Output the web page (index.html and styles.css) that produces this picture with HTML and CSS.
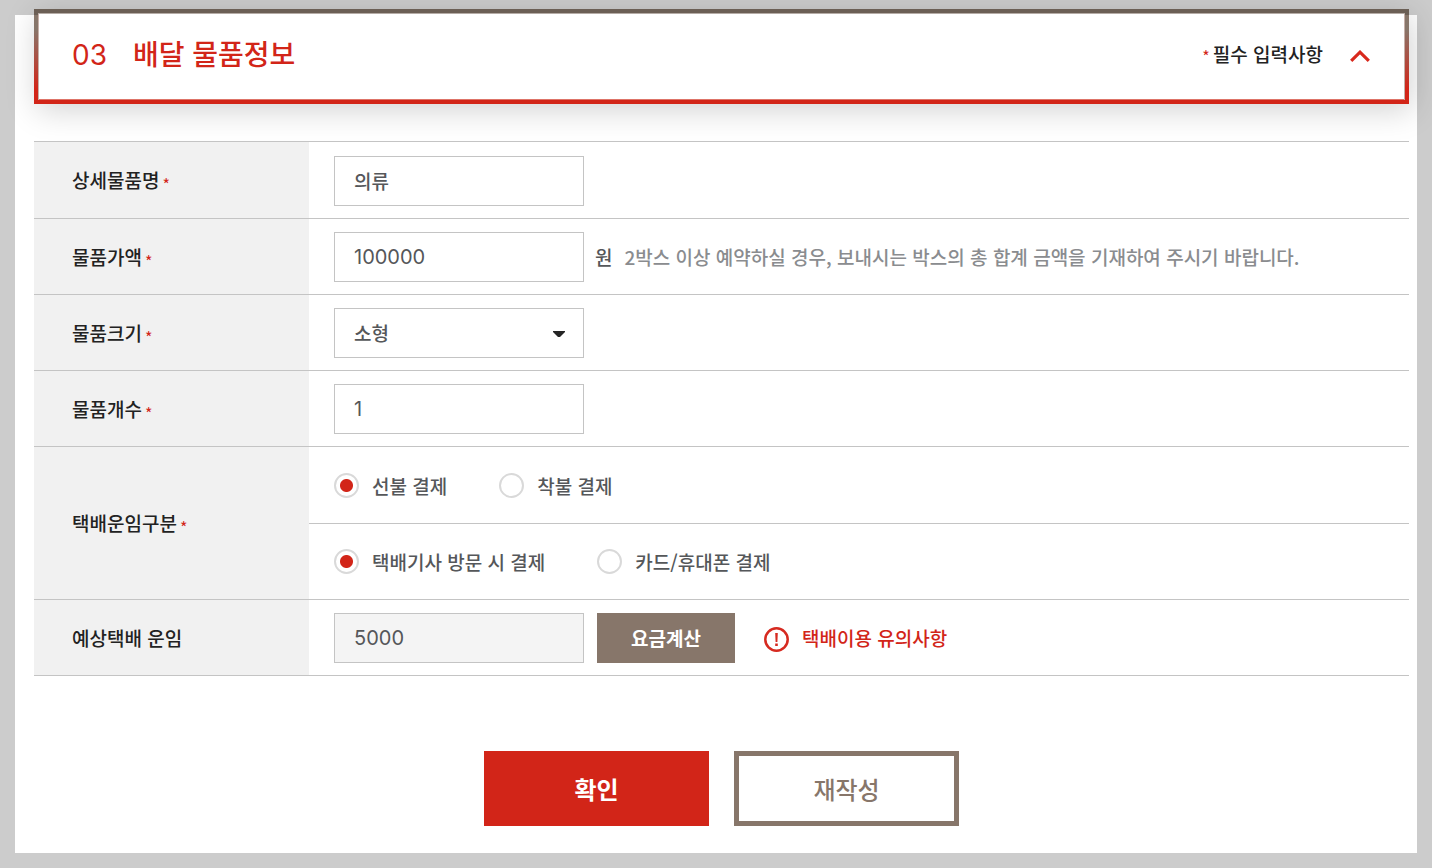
FILE: index.html
```html
<!DOCTYPE html>
<html lang="ko">
<head>
<meta charset="utf-8">
<meta name="viewport" content="width=device-width, initial-scale=1">
<title>배달 물품정보</title>
<link rel="stylesheet" href="styles.css">
</head>
<body>
<main class="panel">
  <header class="section-head">
    <h2 class="section-title"><span class="step">03</span>배달 물품정보</h2>
    <p class="required-note"><span class="star">*</span>필수 입력사항</p>
    <button class="toggle" type="button" aria-label="접기">
      <svg width="20" height="12" viewBox="0 0 20 12" aria-hidden="true"><path d="M1.200 10.800 10 2.200l8.800 8.600" fill="none" stroke="#d8281c" stroke-width="3.200"/></svg>
    </button>
  </header>

  <form>
    <table class="form-table">
      <tbody>
        <tr class="tall">
          <th scope="row"><label for="item-name">상세물품명</label><span class="star">*</span></th>
          <td><input class="field" id="item-name" type="text" value="의류"></td>
        </tr>
        <tr>
          <th scope="row"><label for="item-price">물품가액</label><span class="star">*</span></th>
          <td>
            <div class="line">
              <input class="field number" id="item-price" type="text" value="100000">
              <span class="unit">원</span>
              <span class="help">2박스 이상 예약하실 경우, 보내시는 박스의 총 합계 금액을 기재하여 주시기 바랍니다.</span>
            </div>
          </td>
        </tr>
        <tr>
          <th scope="row"><label for="item-size">물품크기</label><span class="star">*</span></th>
          <td>
            <div class="select-box">
              <select class="field" id="item-size"><option>소형</option></select>
              <svg class="caret" width="12" height="6" viewBox="0 0 12 6" aria-hidden="true"><path d="M0 0h12v1L7 6H5L0 1z" fill="#252525"/></svg>
            </div>
          </td>
        </tr>
        <tr>
          <th scope="row"><label for="item-count">물품개수</label><span class="star">*</span></th>
          <td><input class="field number" id="item-count" type="text" value="1"></td>
        </tr>
        <tr class="tall">
          <th scope="row" rowspan="2">택배운임구분<span class="star">*</span></th>
          <td>
            <div class="choices">
              <label class="choice"><input type="radio" name="payer" checked>선불 결제</label>
              <label class="choice"><input type="radio" name="payer">착불 결제</label>
            </div>
          </td>
        </tr>
        <tr>
          <td>
            <div class="choices">
              <label class="choice"><input type="radio" name="method" checked>택배기사 방문 시 결제</label>
              <label class="choice"><input type="radio" name="method">카드/휴대폰 결제</label>
            </div>
          </td>
        </tr>
        <tr>
          <th scope="row"><label for="fare">예상택배 운임</label></th>
          <td>
            <div class="line">
              <input class="field number" id="fare" type="text" value="5000" readonly>
              <button class="calc" type="button">요금계산</button>
              <a class="notice" href="#">
                <svg class="notice-icon" width="25" height="25" viewBox="0 0 25 25" aria-hidden="true"><circle cx="12.500" cy="12.500" r="11.200" fill="none" stroke="#d62a20" stroke-width="2.500"/><path d="M11.200 6h2.600l-.4 9h-1.800zM11.200 16.600h2.600V19h-2.600z" fill="#d62a20"/></svg>
                택배이용 유의사항
              </a>
            </div>
          </td>
        </tr>
      </tbody>
    </table>

    <div class="actions">
      <button class="action confirm" type="submit">확인</button>
      <button class="action reset" type="reset">재작성</button>
    </div>
  </form>
</main>
</body>
</html>
```
FILE: styles.css
```css
* {
  box-sizing: border-box;
}

body {
  margin: 0;
  padding: 15px;
  background: #ccc;
  color: #55575a;
  font: 500 19px/28px "Noto Sans CJK KR", "Noto Sans", sans-serif;
}

input,
select,
button {
  font: inherit;
  color: inherit;
}

button {
  border: 0;
  padding: 0;
  cursor: pointer;
}

.panel {
  background: #fff;
  padding: 0 8px 27px 19px;
}

.section-head {
  display: flex;
  align-items: center;
  position: relative;
  top: -6px;
  min-height: 95px;
  padding: 0 35px 2px 34px;
  border: 4px solid transparent;
  background:
    linear-gradient(#fff, #fff) padding-box,
    linear-gradient(#6b5f55 6px, #87766a 6px, #87766a 20px, #d22518 80px) border-box;
  box-shadow:
    inset 0 1px #b5aca6,
    inset 1px 0 #c6b0a9,
    inset -1px 0 #c6b0a9,
    inset 0 -1px #de7468,
    3px 6px 30px rgba(0, 0, 0, 0.18);
}

.section-title {
  display: flex;
  align-items: center;
  gap: 26px;
  flex: 1;
  margin: 0;
  padding-bottom: 6px;
  color: #d22518;
  font-size: 28px;
  font-weight: 500;
  line-height: 40px;
}

.step {
  padding-top: 4px;
  font-family: Inter, sans-serif;
  font-weight: 400;
}

.required-note {
  display: flex;
  align-items: center;
  margin: 0;
  padding-bottom: 4px;
  color: #222;
}

.star {
  margin: 0 3px;
  color: #d22518;
  font-size: 16px;
  font-weight: 400;
  line-height: 16px;
}

.required-note .star {
  padding-top: 4px;
}

.form-table .star {
  vertical-align: -3px;
}

.toggle {
  display: flex;
  margin-left: 27px;
  background: none;
}

.form-table {
  width: 100%;
  margin-top: 31px;
  border-collapse: separate;
  border-spacing: 0;
  border-top: 1px solid #c4c4c4;
}

.form-table tr {
  height: 76px;
}

.form-table .tall {
  height: 77px;
}

.form-table th,
.form-table td {
  padding: 0;
  border-bottom: 1px solid #c4c4c4;
  vertical-align: middle;
}

.form-table th {
  width: 275px;
  padding-left: 38px;
  background: #f1f1f1;
  color: #222;
  font-weight: 500;
  text-align: left;
}

.form-table td {
  padding-left: 25px;
}

.form-table .tall td {
  padding-top: 1px;
}

.field {
  display: block;
  width: 250px;
  height: 50px;
  padding: 0 19px;
  border: 1px solid #c4c4c4;
  border-radius: 0;
  background: #fff;
  appearance: none;
}

.field[readonly] {
  background: #f4f4f4;
}

.number {
  font-family: Inter, sans-serif;
  font-size: 20px;
  font-weight: 400;
}

.line {
  display: flex;
  align-items: center;
}

.unit {
  margin: 0 12px 0 11px;
}

.help {
  color: #8a8c8f;
}

.select-box {
  position: relative;
  width: 250px;
}

.caret {
  position: absolute;
  top: 23px;
  right: 19px;
  pointer-events: none;
}

.choices {
  display: flex;
  gap: 52px;
}

.choice {
  display: flex;
  align-items: center;
  gap: 13px;
}

.choice input {
  width: 25px;
  height: 25px;
  margin: 0;
  border: 2px solid #d9d9d9;
  border-radius: 50%;
  background: #fff;
  appearance: none;
}

.choice input:checked {
  background: radial-gradient(circle, #d22518 6px, #fff 7px);
}

.calc {
  width: 138px;
  height: 50px;
  margin: 0 29px 0 13px;
  background: #87766a;
  color: #fff;
  font-weight: 700;
}

.notice {
  display: flex;
  align-items: center;
  gap: 13px;
  color: #d22518;
  text-decoration: none;
}

.notice-icon {
  margin-top: 3px;
}

.actions {
  display: flex;
  justify-content: center;
  gap: 25px;
  margin-top: 75px;
}

.action {
  width: 225px;
  height: 75px;
  font-size: 24px;
}

.confirm {
  background: #d22518;
  color: #fff;
  font-weight: 700;
}

.reset {
  border: 5px solid #87766a;
  background: #fff;
  color: #87766a;
}
```
